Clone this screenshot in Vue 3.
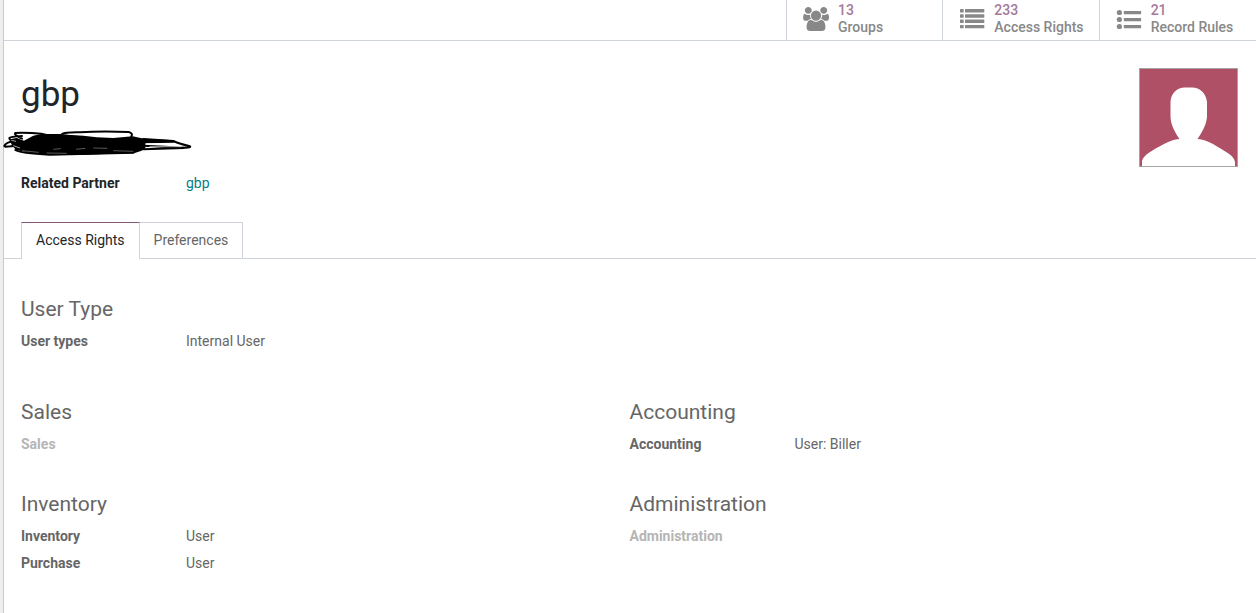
<script setup>
import { ref } from 'vue'

const stats = [
  { icon: 'users', value: '13', label: 'Groups' },
  { icon: 'list', value: '233', label: 'Access Rights' },
  { icon: 'bullets', value: '21', label: 'Record Rules' },
]
const tabs = ['Access Rights', 'Preferences']
const active = ref(tabs[0])
const userType = { title: 'User Type', fields: [{ label: 'User types', value: 'Internal User' }] }
const groups = [
  { title: 'Sales', fields: [{ label: 'Sales', value: '' }] },
  { title: 'Accounting', fields: [{ label: 'Accounting', value: 'User: Biller' }] },
  {
    title: 'Inventory',
    fields: [
      { label: 'Inventory', value: 'User' },
      { label: 'Purchase', value: 'User' },
    ],
  },
  { title: 'Administration', fields: [{ label: 'Administration', value: '' }] },
]
</script>

<template>
  <main class="sheet">
    <div class="button-box">
      <div class="stats">
        <button v-for="s in stats" :key="s.label" type="button" class="stat">
          <svg v-if="s.icon === 'users'" class="icon" viewBox="0 0 1920 1792" aria-hidden="true">
            <path d="M593 896q-162 5-265 128h-134q-82 0-138-40.5t-56-118.5q0-353 124-353 6 0 43.5 21t97.5 42.5 119 21.5q67 0 133-23-5 37-5 66 0 159 97 256zm1071 637q0 120-73 189.5t-194 69.5h-874q-121 0-194-69.5t-73-189.5q0-53 3.5-103.5t14-109 26.5-108.5 43-97.5 62-81 85.5-53.5 111.5-20q10 0 43 21.5t73 48 107 48 135 21.5 135-21.5 107-48 73-48 43-21.5q61 0 111.5 20t85.5 53.5 62 81 43 97.5 26.5 108.5 14 109 3.5 103.5zm-1024-1277q0 106-75 181t-181 75-181-75-75-181 75-181 181-75 181 75 75 181zm704 384q0 159-112.5 271.5t-271.5 112.5-271.5-112.5-112.5-271.5 112.5-271.5 271.5-112.5 271.5 112.5 112.5 271.5zm576 225q0 78-56 118.5t-138 40.5h-134q-103-123-265-128 97-97 97-256 0-29-5-66 66 23 133 23 59 0 119-21.5t97.5-42.5 43.5-21q124 0 124 353zm-128-609q0 106-75 181t-181 75-181-75-75-181 75-181 181-75 181 75 75 181z" />
          </svg>
          <svg v-else-if="s.icon === 'list'" class="icon" viewBox="0 0 26 24" aria-hidden="true">
            <g v-for="n in 4" :key="n">
              <rect x="1" :y="2 + (n - 1) * 5.3" width="3.7" height="3.4" rx=".5" />
              <rect x="6" :y="2 + (n - 1) * 5.3" width="19.3" height="3.4" rx=".5" />
            </g>
          </svg>
          <svg v-else class="icon" viewBox="0 0 26 24" aria-hidden="true">
            <g v-for="n in 3" :key="n">
              <circle cx="3.4" :cy="5.5 + (n - 1) * 7" r="2.6" />
              <rect x="7.8" :y="3.9 + (n - 1) * 7" width="17.3" height="3.3" rx=".5" />
            </g>
          </svg>
          <span class="stat-text">
            <span class="stat-value">{{ s.value }}</span>
            <span>{{ s.label }}</span>
          </span>
        </button>
      </div>
    </div>

    <header class="head">
      <div>
        <h1>gbp</h1>
        <svg class="scribble" viewBox="9 30 567 81" aria-hidden="true">
          <path class="mass" d="M72 62L100 47L125 42L180 42L215 45L250 47L290 52L340 54L398 49L432 56L522 61L522 68L436 70L436 85L425 92L402 100L330 101L240 105L150 104L90 99L48 90L36 76L28 58L50 54Z" />
          <path class="line" d="M66 56Q40 44 46 39Q60 37 96 39Q124 40 150 47M60 70Q26 62 28 54Q30 50 66 48M186 42Q196 36 240 37Q300 33 386 36Q400 40 394 49M13 78Q18 66 44 64M13 78Q24 84 60 70M16 80L44 78M46 90Q60 100 150 104M430 57L520 63Q534 70 570 79Q574 83 556 83L430 77M430 88L552 84M146 104L400 98" />
          <path class="gap" d="M205 43L214 43M440 71L528 71M448 80L545 80M40 77L60 84M34 61L48 64" />
          <path class="glint" d="M160 88l22-2M228 88l28-3M280 84l42 1M140 99l60 1M66 92l50 5M340 92l60 2" />
        </svg>
        <dl class="fields partner">
          <div class="field">
            <dt>Related Partner</dt>
            <dd><a href="#">gbp</a></dd>
          </div>
        </dl>
      </div>
      <svg class="avatar" viewBox="0 0 99 99" role="img" aria-label="User avatar">
        <rect x=".5" y=".5" width="98" height="98" fill="#af5067" stroke="#a5a3a4" />
        <path fill="#fff" d="M3 98V93C4 87 14 82 25 76C31 73 35 71.500 40.500 71C36 64 32 58 31.500 49V34C32 25 38 19.500 46 19.500H53C61 19.500 67 25 68 34V49C67 58 63 64 58.500 71C64 71.500 68 73 74 76C85 83 95 87 96 94V98Z" />
      </svg>
    </header>

    <nav class="tabs" role="tablist">
      <button
        v-for="t in tabs"
        :key="t"
        type="button"
        role="tab"
        class="tab"
        :class="{ active: active === t }"
        :aria-selected="active === t"
        @click="active = t"
      >{{ t }}</button>
    </nav>

    <div class="page">
      <section class="group">
        <h2>{{ userType.title }}</h2>
        <dl class="fields">
          <div v-for="f in userType.fields" :key="f.label" class="field">
            <dt>{{ f.label }}</dt>
            <dd>{{ f.value }}</dd>
          </div>
        </dl>
      </section>
      <div class="columns">
        <section v-for="g in groups" :key="g.title" class="group">
          <h2>{{ g.title }}</h2>
          <dl class="fields">
            <div v-for="f in g.fields" :key="f.label" class="field" :class="{ empty: !f.value }">
              <dt>{{ f.label }}</dt>
              <dd>{{ f.value }}</dd>
            </div>
          </dl>
        </section>
      </div>
    </div>
  </main>
</template>

<style>
body {
  background: #eee;
}
</style>

<style scoped>
.sheet {
  box-sizing: border-box;
  min-height: 100vh;
  margin-left: 3px;
  border-left: 1px solid #c8c8c8;
  background: #fff;
  color: #666;
  font: 14px/21px Roboto, sans-serif;
}
.button-box {
  display: flex;
  justify-content: flex-end;
  height: 40px;
  padding-right: 1px;
  border-bottom: 1px solid #ced4da;
}
.stats {
  display: grid;
  grid-template-columns: repeat(3, 1fr);
  width: 469px;
}
.stat {
  display: flex;
  align-items: flex-start;
  gap: 9px;
  padding: 0 0 0 16px;
  border: 0;
  border-left: 1px solid #ced4da;
  background: none;
  color: #888;
  font: 500 14px/17px Roboto, sans-serif;
  text-align: left;
  cursor: pointer;
}
.icon {
  flex: none;
  width: 26px;
  height: 24px;
  margin-top: 7px;
  fill: #888;
}
.stat-text {
  display: flex;
  flex-direction: column;
  padding-top: 2px;
  white-space: nowrap;
}
.stat-value {
  color: #a5799a;
}
.head {
  display: flex;
  justify-content: space-between;
  align-items: flex-start;
  padding: 27px 18px 0 17px;
}
h1 {
  margin: 6px 0 14px;
  color: #212529;
  font-size: 35px;
  font-weight: 400;
  line-height: 42px;
}
.scribble {
  display: block;
  width: 189px;
  height: 27px;
  margin-left: -18px;
}
.mass {
  fill: #000;
}
.line {
  fill: none;
  stroke: #000;
  stroke-width: 6;
  stroke-linecap: round;
}
.gap {
  fill: none;
  stroke: #fff;
  stroke-width: 2;
}
.glint {
  fill: none;
  stroke: #888;
  stroke-width: 2;
}
.avatar {
  width: 99px;
  height: 99px;
}
.fields {
  margin: 0;
}
.partner {
  margin-top: 13px;
  color: #212529;
}
.field {
  display: grid;
  grid-template-columns: 165px 1fr;
  line-height: 27px;
}
dt {
  font-weight: 700;
}
dd {
  margin: 0;
}
.empty dt {
  color: #b5b5b5;
}
a {
  color: #017e84;
  text-decoration: none;
}
.tabs {
  display: flex;
  margin-top: 25px;
  padding-left: 17px;
  border-bottom: 1px solid #ced4da;
}
.tab {
  height: 36px;
  padding: 0 14px;
  border: 1px solid #ced4da;
  border-width: 1px 1px 0 0;
  background: #fff;
  color: #666;
  font: 14px/21px Roboto, sans-serif;
  cursor: pointer;
}
.tab.active {
  height: 37px;
  margin-bottom: -1px;
  padding-bottom: 1px;
  border-left-width: 1px;
  border-top-color: #875a7b;
  color: #212529;
}
.page {
  padding: 38px 18px 0 17px;
}
.columns {
  display: grid;
  grid-template-columns: 1fr 1fr;
  row-gap: 34px;
  margin-top: 45px;
}
h2 {
  margin: 0 0 7px;
  font-size: 21px;
  font-weight: 400;
  line-height: 24px;
}
</style>
